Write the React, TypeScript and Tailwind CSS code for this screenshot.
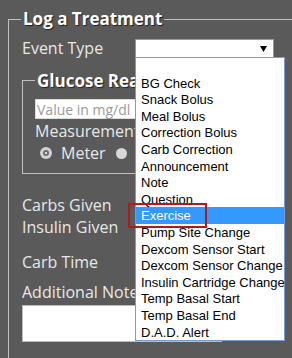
import React from "react";

const items = [
  "",
  "BG Check",
  "Snack Bolus",
  "Meal Bolus",
  "Correction Bolus",
  "Carb Correction",
  "Announcement",
  "Note",
  "Question",
  "Exercise",
  "Pump Site Change",
  "Dexcom Sensor Start",
  "Dexcom Sensor Change",
  "Insulin Cartridge Change",
  "Temp Basal Start",
  "Temp Basal End",
  "D.A.D. Alert",
];

export default function App() {
  return (
    <div className="relative w-[292px] h-[358px] overflow-hidden bg-[#5a5a5a] font-['Open_Sans',sans-serif] text-[#e8e8e8]">
      <div className="ml-[8px] mt-[19px] h-[339px] border-l border-t border-[#c0c0c0] pl-[13px]">
        <div className="-mt-[13px] -ml-px w-fit px-[2px] bg-[#5a5a5a] text-[17px] font-bold leading-[24px] text-white [text-shadow:1px_1px_1px_#222]">
          Log a Treatment
        </div>

        <div className="mt-[6px] flex h-[22px] items-center">
          <span className="w-[113px] text-[16px] leading-[22px]">Event Type</span>
          <div className="relative h-[19px] w-[139px] border border-[#7a9bd3] bg-white">
            <svg className="absolute right-[6px] top-[6px]" width="7" height="6" viewBox="0 0 7 6">
              <path d="M0 0 H7 L3.5 6 Z" fill="#000" />
            </svg>
          </div>
        </div>

        <div className="mt-[21px] w-[260px] border border-[#c0c0c0] pl-[12px] pb-[9px]">
          <div className="-mt-[12px] w-fit max-w-[100px] overflow-hidden px-[2px] bg-[#5a5a5a] text-[17px] font-bold leading-[24px] text-white whitespace-nowrap [text-shadow:1px_1px_1px_#222]">
            Glucose Reading
          </div>
          <div className="mt-[6px] flex h-[20px] w-[120px] items-center border border-[#dddddd] bg-white pl-px text-[14px] text-[#9a9a9a]">
            <span className="max-w-[98px] overflow-hidden whitespace-nowrap">Value in mg/dl</span>
          </div>
          <div className="mt-[1px] max-w-[100px] overflow-hidden whitespace-nowrap text-[16px] leading-[22px]">
            Measurement Method
          </div>
          <div className="flex h-[22px] w-[100px] items-center overflow-hidden pl-[5px] text-[16px] leading-[22px]">
            <div className="flex h-[12px] w-[12px] shrink-0 items-center justify-center rounded-full bg-[#d2d2d2]">
              <div className="flex h-[6px] w-[6px] items-center justify-center rounded-full bg-[#6e6e6e]">
                <div className="h-[2px] w-[2px] rounded-full bg-white" />
              </div>
            </div>
            <span className="ml-[9px]">Meter</span>
            <div className="ml-[10px] h-[11px] w-[11px] shrink-0 rounded-full bg-[#d8d8d8]" />
          </div>
        </div>

        <div className="mt-[20px] text-[16px] leading-[22px]">Carbs Given</div>
        <div className="text-[16px] leading-[22px]">Insulin Given</div>
        <div className="mt-[13px] text-[16px] leading-[22px]">Carb Time</div>
        <div className="mt-[8px] max-w-[113px] overflow-hidden whitespace-nowrap text-[16px] leading-[22px]">
          Additional Notes
        </div>
        <div className="mt-[2px] h-[37px] w-[200px] border border-[#bbbbbb] bg-white" />
      </div>

      <div className="absolute left-[135px] top-[57px] z-10 w-[150px] border border-[#7a9bd3] bg-white font-['Liberation_Sans',Arial,sans-serif] text-[13px] text-black">
        {items.map((it, i) => (
          <div
            key={i}
            className={
              it === "Exercise"
                ? "h-[16.6px] pl-[5px] pt-px leading-[16px] whitespace-nowrap bg-[#3399ff] text-white"
                : "h-[16.6px] pl-[5px] pt-px leading-[16px] whitespace-nowrap"
            }
          >
            {it}
          </div>
        ))}
      </div>

      <div className="absolute left-[128px] top-[203px] z-20 h-[25px] w-[79px] border-2 border-[#b21a1a]" />
    </div>
  );
}
